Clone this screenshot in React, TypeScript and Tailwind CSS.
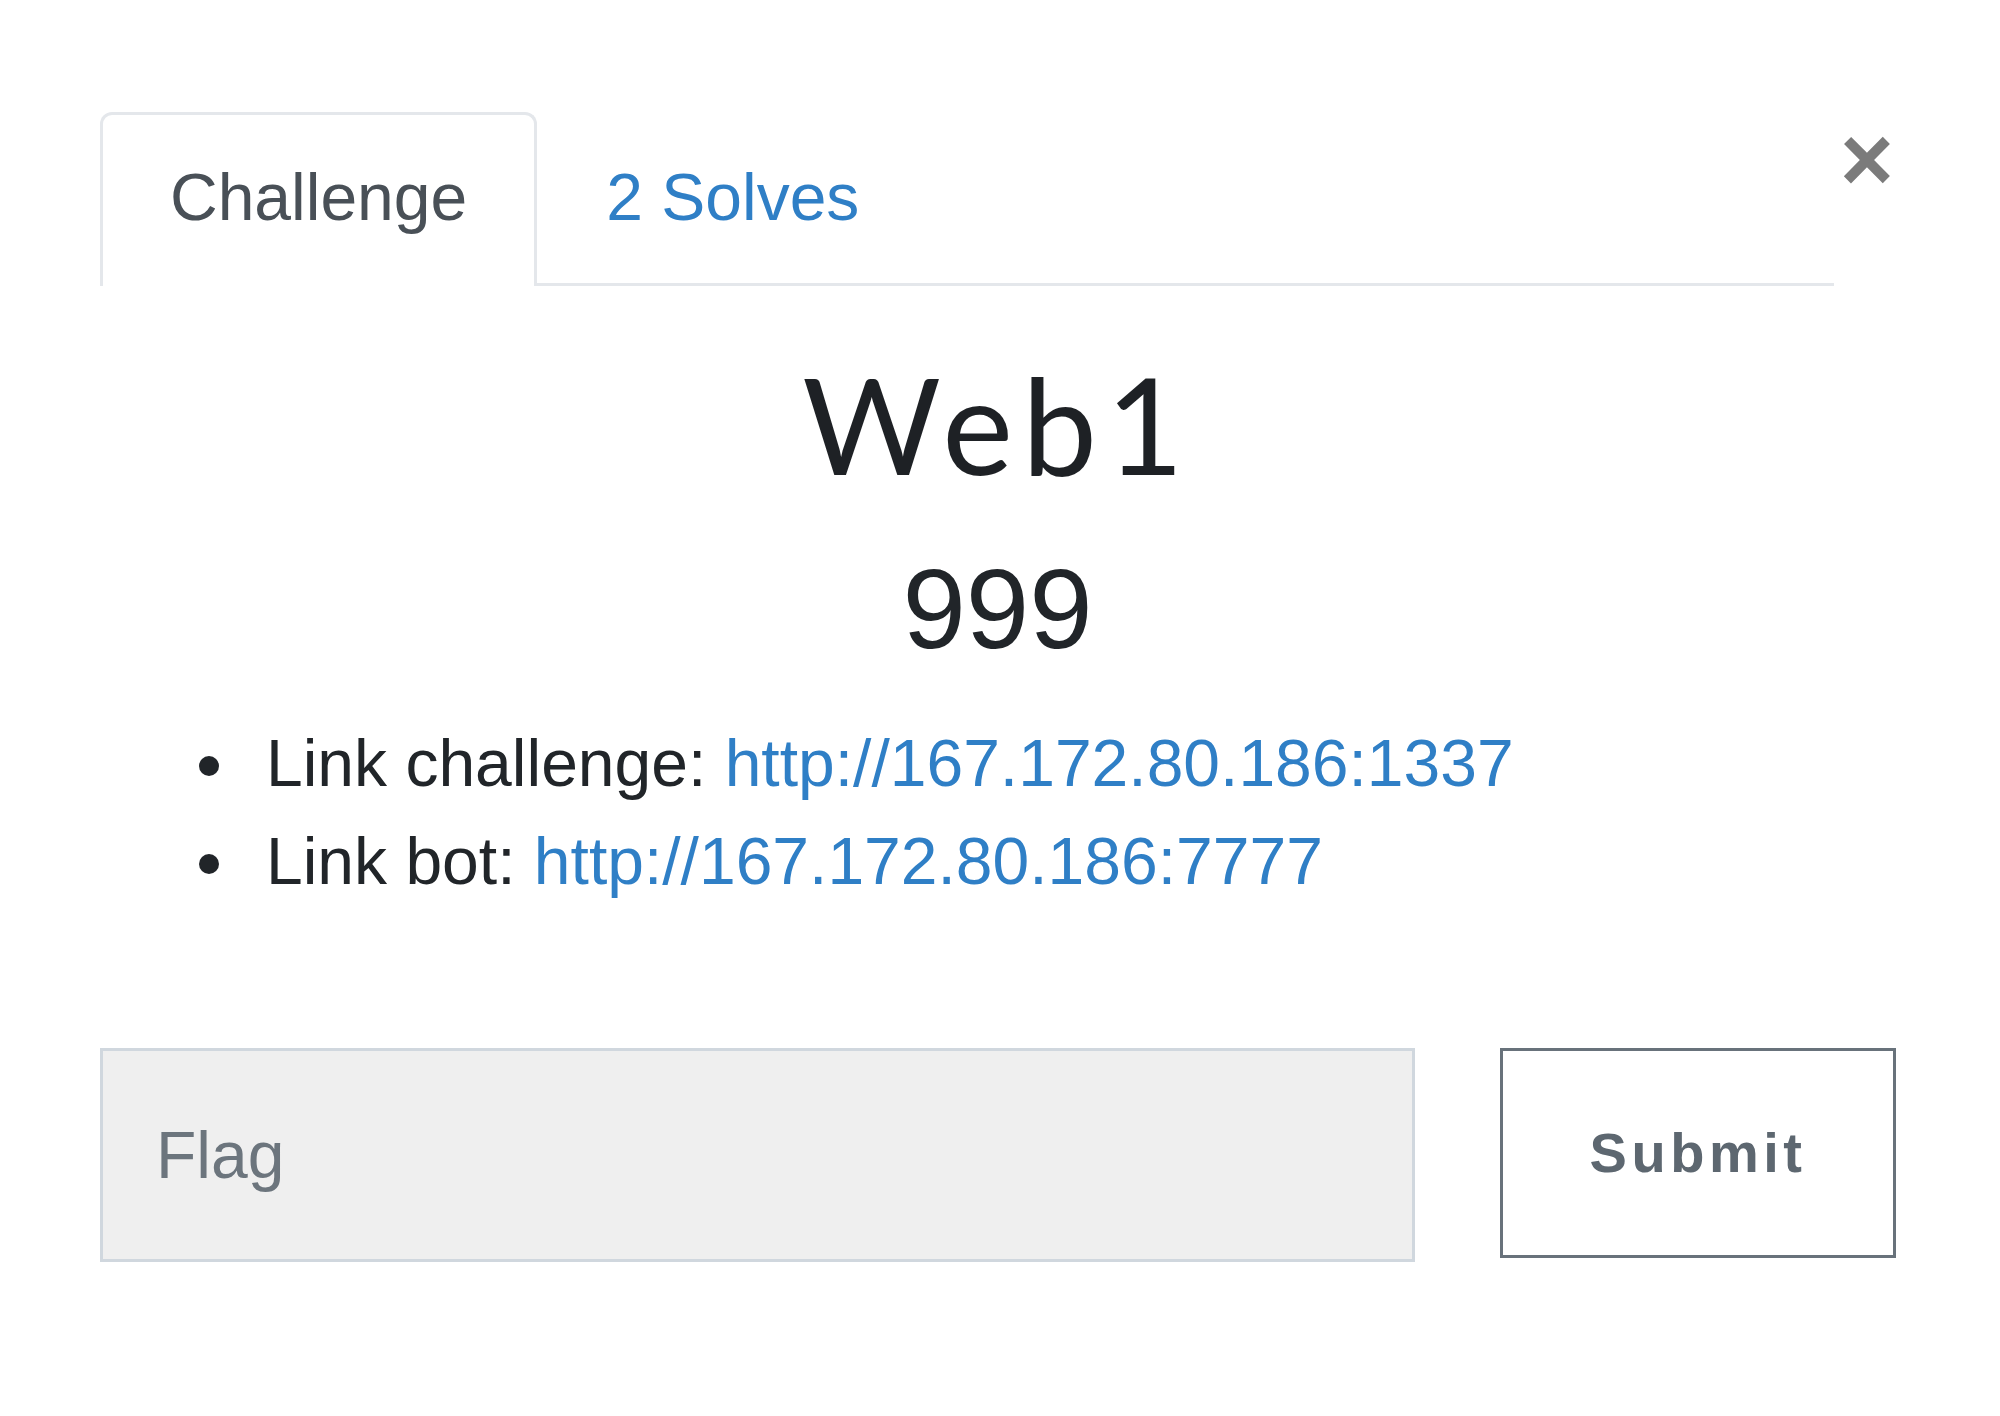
import React, { useState } from "react";

const App: React.FC = () => {
	const [tab, setTab] = useState<"challenge" | "solves">("challenge");
	const [flag, setFlag] = useState("");

	return (
		<div className="min-h-[1416px] w-full bg-white font-['Liberation_Sans',Arial,sans-serif] text-[#212529]">
			<div className="ml-[100px] w-[1800px] pt-[110px]">
				{/* TABS + CLOSE */}
				<div className="flex items-start">
					<ul className="mt-[2px] flex w-[1734px] flex-none border-b-[3px] border-[#e4e7eb]">
						<li className="-mb-[3px]">
							<button
								onClick={() => setTab("challenge")}
								className={`block rounded-t-[12px] border-[3px] border-b-0 px-[67px] pt-[33px] pb-[39px] text-[66px] leading-[99px] ${
									tab === "challenge"
										? "border-[#e4e7eb] bg-white text-[#495057]"
										: "border-transparent text-[#2f7fc6]"
								}`}>
								Challenge
							</button>
						</li>
						<li className="-mb-[3px]">
							<button
								onClick={() => setTab("solves")}
								className={`block rounded-t-[12px] border-[3px] border-b-0 px-[66px] pt-[33px] pb-[39px] text-[66px] leading-[99px] ${
									tab === "solves"
										? "border-[#e4e7eb] bg-white text-[#495057]"
										: "border-transparent text-[#2f7fc6]"
								}`}>
								2 Solves
							</button>
						</li>
					</ul>
					<button className="mt-[3px] ml-[6px] text-[92px] leading-none font-bold text-[#7b7b7b]">
						×
					</button>
				</div>

				{/* CHALLENGE BODY */}
				<div className="w-[1795px]">
					<h2 className="mt-[58px] text-center font-['Lato',sans-serif] text-[134px] leading-[1.2] font-normal tracking-[9px] text-[#1e2125]">
						Web1
					</h2>
					<h4 className="mt-[36px] text-center text-[114px] leading-[1.2] font-normal">
						999
					</h4>
					<ul className="mt-[36px] pl-[99px] text-[66px] leading-[98px]">
						<li className="flex items-center">
							<span className="mr-[47px] h-[20px] w-[20px] flex-none translate-y-[3px] rounded-full bg-[#212529]" />
							<span>
								Link challenge:{" "}
								<a href="#" className="text-[#2f7fc6]">
									http://167.172.80.186:1337
								</a>
							</span>
						</li>
						<li className="flex items-center">
							<span className="mr-[47px] h-[20px] w-[20px] flex-none translate-y-[3px] rounded-full bg-[#212529]" />
							<span>
								Link bot:{" "}
								<a href="#" className="text-[#2f7fc6]">
									http://167.172.80.186:7777
								</a>
							</span>
						</li>
					</ul>
				</div>

				{/* FLAG FORM */}
				<form
					className="mt-[138px] flex items-start gap-[85px]"
					onSubmit={(e) => e.preventDefault()}>
					<input
						type="text"
						placeholder="Flag"
						value={flag}
						onChange={(e) => setFlag(e.target.value)}
						className="h-[214px] w-[1315px] border-[3px] border-[#d0d7de] bg-[#efefef] pl-[53px] text-[66px] text-[#495057] outline-none placeholder:text-[#6c757d]"
					/>
					<button
						type="submit"
						className="h-[210px] w-[396px] border-[3px] border-[#68727b] bg-white text-[56px] font-bold tracking-[4.5px] text-[#5d6770]">
						Submit
					</button>
				</form>
			</div>
		</div>
	);
};

export default App;
